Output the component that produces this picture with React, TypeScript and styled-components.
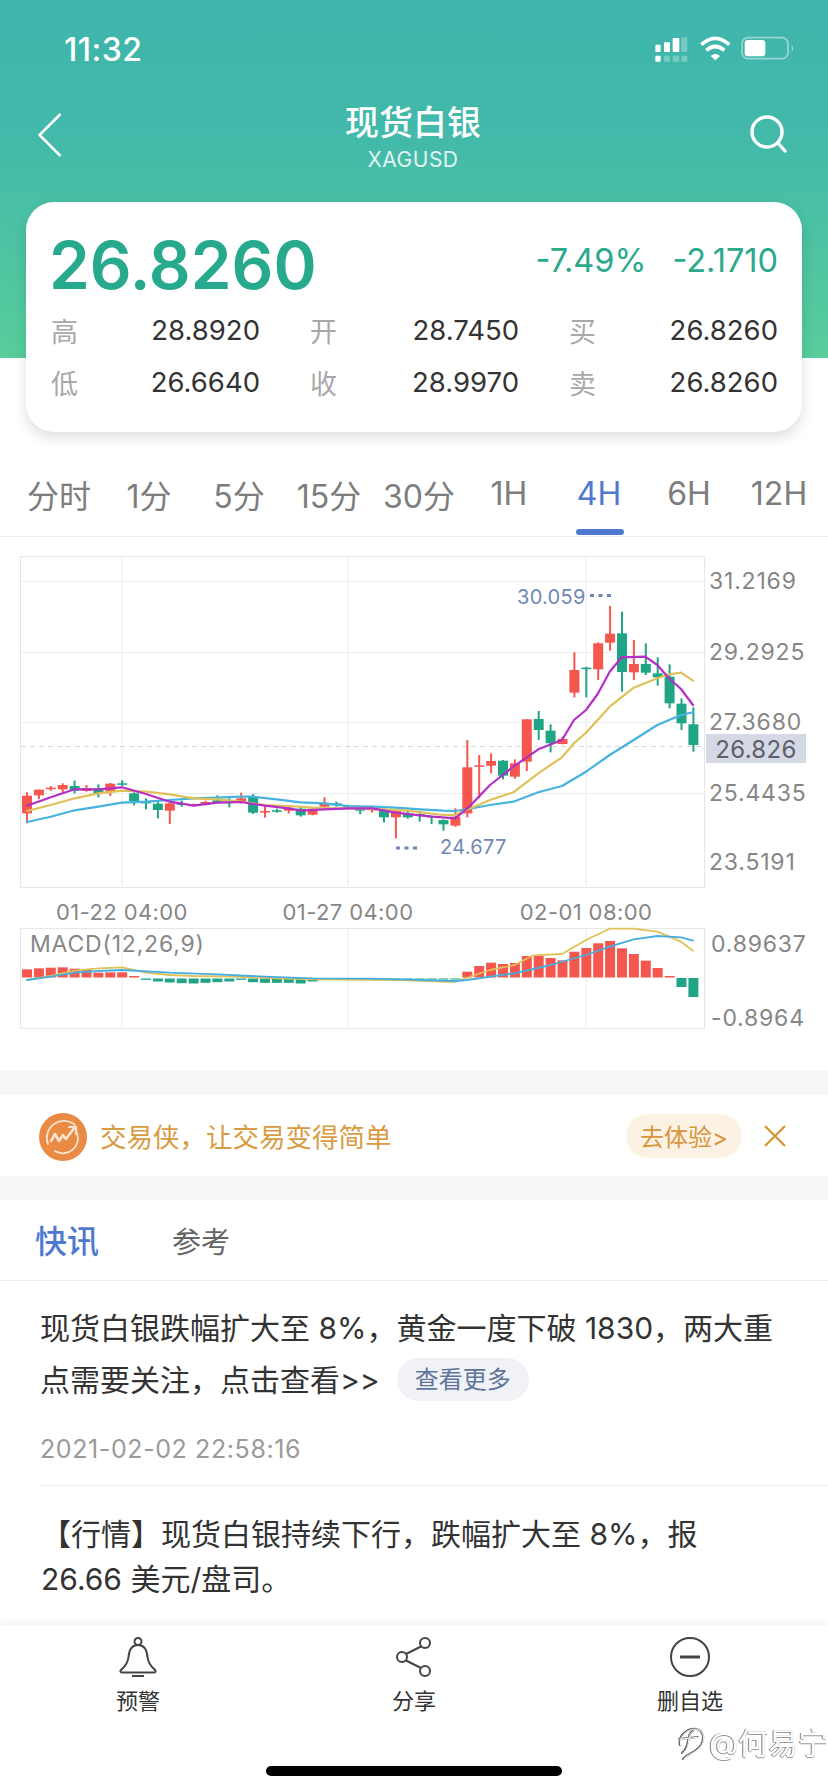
import React from "react";
import styled, { createGlobalStyle } from "styled-components";

const FONT = `Inter, "Noto Sans CJK SC", sans-serif`;

const Global = createGlobalStyle`
  html, body { margin: 0; padding: 0; background: #fff; }
  body { font-family: ${FONT}; text-spacing-trim: space-all; }
  * { box-sizing: border-box; }
`;

const Page = styled.div`
  width: 828px;
  height: 1792px;
  overflow: hidden;
  position: relative;
  background: #fff;
  display: flex;
  flex-direction: column;
`;

const Hero = styled.header`
  height: 432px;
  background: linear-gradient(180deg, #3fb5ac 0, #42b9aa 130px, #58cd9b 358px) no-repeat;
  background-size: 100% 358px;
  flex: none;
`;
const StatusBar = styled.div`
  height: 98px;
  display: flex;
  align-items: center;
  justify-content: space-between;
  padding: 0 28px 0 64px;
`;
const Clock = styled.span`
  color: #fff;
  font-size: 32px;
  font-weight: 500;
  letter-spacing: 0.5px;
`;
const Nav = styled.nav`
  height: 104px;
  display: grid;
  grid-template-columns: 1fr auto 1fr;
  align-items: start;
  padding: 0 40px 0 38px;
`;
const BackIcon = styled.svg`
  margin-top: 15px;
  justify-self: start;
`;
const SearchIcon = styled.svg`
  margin-top: 17px;
  justify-self: end;
`;
const TitleBlock = styled.div`
  padding-top: 5px;
  text-align: center;
  color: #fff;
`;
const Title = styled.div`
  font-size: 34px;
  line-height: 40px;
  font-weight: 500;
`;
const Symbol = styled.div`
  font-size: 21px;
  line-height: 24px;
  letter-spacing: 0.5px;
  margin-top: 5px;
  opacity: 0.85;
`;

const QuoteCard = styled.section`
  width: 776px;
  height: 230px;
  margin-left: 26px;
  padding: 26px 24px 0 25px;
  background: #fff;
  border-radius: 28px;
  box-shadow: 0 6px 14px rgba(0, 0, 0, 0.13);
`;
const PriceRow = styled.div`
  height: 74px;
  display: flex;
  align-items: center;
  justify-content: space-between;
  margin-bottom: 2px;
`;
const Price = styled.div`
  margin-left: -2px;
  font-size: 65.5px;
  font-weight: 600;
  color: #27a98d;
`;
const Changes = styled.div`
  display: flex;
  gap: 26px;
  margin-top: -10px;
  color: #2aa98b;
  font-size: 32.5px;
`;
const Stats = styled.div`
  display: grid;
  grid-template-columns: repeat(3, 209px);
  justify-content: space-between;
  grid-auto-rows: 52px;
`;
const Stat = styled.div`
  display: flex;
  align-items: center;
  justify-content: space-between;
`;
const StatLabel = styled.span`
  color: #a8a8a8;
  font-size: 27px;
`;
const StatValue = styled.span`
  color: #333;
  font-size: 27.5px;
`;

const Periods = styled.div`
  flex: none;
  margin-top: 23px;
  height: 82px;
  padding: 0 0 4px 14px;
  display: grid;
  grid-template-columns: repeat(9, 90px);
  border-bottom: 1px solid #ececec;
`;
const Period = styled.div<{ $active?: boolean }>`
  position: relative;
  display: flex;
  align-items: center;
  justify-content: center;
  font-size: 32px;
  white-space: nowrap;
  color: ${(p) => (p.$active ? "#4f78cf" : "#7d7d7d")};
  &::after {
    content: "";
    display: ${(p) => (p.$active ? "block" : "none")};
    position: absolute;
    left: 22px;
    right: 20px;
    bottom: -3px;
    height: 6px;
    border-radius: 3px;
    background: #4f78cf;
  }
`;

const ChartSvg = styled.svg`
  display: block;
  flex: none;
`;
const AxisText = styled.text`
  font-family: ${FONT};
  font-size: 23px;
  letter-spacing: 0.8px;
  fill: #868686;
  dominant-baseline: central;
`;
const DateText = styled(AxisText)`
  font-size: 22px;
  letter-spacing: 0.4px;
`;
const TagText = styled(AxisText)`
  fill: #5d6068;
  font-size: 24px;
  letter-spacing: 0.3px;
`;
const NoteText = styled(AxisText)`
  fill: #6f87b6;
  font-size: 20px;
  letter-spacing: 0.3px;
`;

const Band = styled.div`
  flex: none;
  height: 24px;
  background: #f6f6f6;
`;
const AdRow = styled.div`
  flex: none;
  height: 81px;
  display: flex;
  align-items: center;
  padding: 0 42px 0 39px;
`;
const AdLogo = styled.svg`
  margin-top: 3px;
  flex: none;
`;
const AdText = styled.span`
  margin-left: 13px;
  font-size: 26.5px;
  color: #d99b42;
`;
const AdPill = styled.span`
  margin-left: auto;
  width: 116px;
  height: 44px;
  border-radius: 22px;
  background: #fbf2e3;
  color: #d8963c;
  font-size: 24px;
  display: flex;
  align-items: center;
  justify-content: center;
`;
const AdClose = styled.svg`
  margin-left: 22px;
  flex: none;
`;

const NewsTabs = styled.div`
  flex: none;
  height: 81px;
  display: flex;
  align-items: center;
  padding-left: 35px;
  border-bottom: 1px solid #ececec;
`;
const NewsTab = styled.span<{ $active?: boolean }>`
  font-size: ${(p) => (p.$active ? "32px" : "29px")};
  font-weight: ${(p) => (p.$active ? 500 : 400)};
  color: ${(p) => (p.$active ? "#4f78cf" : "#666")};
  margin-right: 73px;
  margin-bottom: ${(p) => (p.$active ? "3px" : "0")};
`;
const NewsList = styled.div`
  flex: 1;
  overflow: hidden;
  padding-left: 41px;
`;
const Article = styled.article`
  padding: 21px 38px 21px 0;
  border-bottom: 1px solid #ececec;
`;
const ArticleText = styled.p`
  margin: 0 0 0 -1px;
  font-size: 30px;
  line-height: 52px;
  color: #333;
`;
const MorePill = styled.span`
  display: inline-flex;
  align-items: center;
  justify-content: center;
  width: 132px;
  height: 43px;
  margin-left: 17px;
  vertical-align: 3px;
  border-radius: 22px;
  background: #f0f2f5;
  color: #61749a;
  font-size: 24px;
  line-height: 43px;
`;
const Stamp = styled.div`
  margin: 28px 0 0 -1px;
  font-size: 25px;
  letter-spacing: 0.6px;
  line-height: 30px;
  color: #9a9a9a;
`;
const Brief = styled.p`
  margin: 26px 0 0 0;
  font-size: 30px;
  line-height: 45px;
  color: #333;
`;

const BottomBar = styled.footer`
  flex: none;
  height: 167px;
  padding-top: 12px;
  display: grid;
  grid-template-columns: repeat(3, 276px);
  align-items: start;
  background: #fff;
  box-shadow: 0 -3px 7px rgba(0, 0, 0, 0.05);
  position: relative;
`;
const BarItem = styled.div`
  display: flex;
  flex-direction: column;
  align-items: center;
  gap: 10px;
`;
const BarLabel = styled.span`
  font-size: 22px;
  line-height: 28px;
  color: #333;
`;
const Watermark = styled.div`
  position: absolute;
  left: 677px;
  top: 98px;
  display: flex;
  align-items: center;
  gap: 4px;
  font-size: 30px;
  line-height: 40px;
  color: #fff;
  text-shadow: -1px 0 0 #777, 0 1px 0 #999;
`;
const HomeBar = styled.div`
  position: absolute;
  left: 266px;
  top: 141px;
  width: 296px;
  height: 10px;
  border-radius: 5px;
  background: #000;
`;

type C = [number, number, number, number, "r" | "g"];
const candles: C[] = [
  [767,820,757,850,"r"],[749,766,749,777,"r"],[743,747,738,752,"r"],[735,748,730,758,"r"],
  [738,752,722,760,"g"],[744,753,735,755,"r"],[745,760,733,772,"g"],[731,755,729,768,"r"],
  [730,734,721,738,"g"],[760,783,757,796,"g"],[783,790,775,808,"g"],[791,810,785,835,"g"],
  [790,812,788,852,"r"],[790,793,782,800,"g"],[793,797,791,799,"r"],[786,794,782,796,"r"],
  [781,788,766,790,"g"],[785,788,775,802,"g"],[775,788,758,790,"r"],[771,818,762,822,"g"],
  [813,816,798,833,"r"],[811,815,806,818,"g"],[803,812,797,820,"r"],[806,826,800,830,"g"],
  [806,824,803,826,"r"],[790,800,772,803,"r"],[790,796,785,800,"g"],[798,802,795,805,"g"],
  [805,812,800,823,"g"],[806,811,800,818,"r"],[812,832,805,847,"g"],[813,832,810,895,"r"],
  [820,832,812,836,"g"],[822,826,815,845,"g"],[828,832,828,852,"g"],[840,853,838,872,"g"],
  [830,857,805,860,"r"],[682,820,600,832,"r"],[676,680,645,775,"r"],[663,677,640,700,"r"],
  [662,707,660,718,"g"],[670,710,658,716,"r"],[538,665,538,693,"r"],[537,570,513,600,"g"],
  [572,610,553,637,"g"],[597,612,590,613,"r"],[390,458,337,472,"r"],[383,387,380,472,"g"],
  [310,388,307,420,"r"],[281,308,198,332,"r"],[280,396,215,455,"g"],[372,397,300,420,"r"],
  [372,398,310,405,"g"],[400,412,352,437,"g"],[410,490,373,505,"g"],[491,550,475,570,"g"],
  [553,615,502,635,"g"],
];
const RED = "#f5574f";
const GREEN = "#1fa585";
const cx = (i: number) => 27 + 11.9 * i;
const py = (v: number) => 540 + v / 3;

const pts = (a: number[][], ox: number, oy: number) =>
  a.map(([x, y]) => `${(x / 3 + ox).toFixed(1)},${(y / 3 + oy).toFixed(1)}`).join(" ");

const ma5L = [[81,797],[152,772],[224,748],[295,748],[366,742],[438,762],[509,785],[581,797],[652,788],[723,786],[795,797],[866,805],[902,812],[973,808],[1045,805],[1116,805],[1187,818],[1259,826],[1300,830]];
const ma5R = [[100,830],[165,835],[205,803],[270,735],[340,680],[415,628],[486,600],[522,540],[558,510],[593,462],[629,395],[665,352],[736,350],[772,375],[807,415],[843,447],[879,495]];
const ma10L = [[81,813],[152,795],[224,775],[295,760],[366,752],[438,755],[509,763],[581,775],[652,778],[723,785],[795,795],[866,798],[937,803],[1009,805],[1080,805],[1151,808],[1222,812],[1330,825]];
const ma10R = [[130,825],[165,825],[205,808],[270,780],[340,757],[415,700],[486,652],[522,610],[558,578],[629,500],[701,443],[772,415],[807,403],[843,398],[879,422]];
const ma20L = [[81,846],[152,830],[224,811],[295,800],[366,788],[438,785],[509,780],[581,775],[652,773],[723,770],[759,770],[830,778],[902,787],[973,790],[1045,798],[1116,800],[1187,803],[1259,808],[1330,812]];
const ma20R = [[130,812],[165,813],[205,807],[270,795],[340,785],[415,757],[486,738],[558,695],[629,645],[701,600],[772,555],[843,525],[879,517]];

const macdBase = 977.5;
const macdRedTops: [number, number][] = [
  [0,388],[1,385],[2,383],[3,382],[4,386],[5,388],[6,398],[7,397],[8,397],[9,408],
];
const macdGreen: [number, number][] = [
  [10,419],[11,424],[12,427],[13,429],[14,430],[15,428],[16,426],[17,424],[18,419],[19,426],[20,428],[21,428],[22,428],[23,430],[24,424],
  [25,416],[26,416],[27,416],[28,416],[29,416],[30,416],[31,417],[32,417],[33,418],[34,418],[35,418],[36,418],
];
const macdRedR: [number, number][] = [
  [37,275],[38,258],[39,248],[40,252],[41,249],[42,228],[43,228],[44,234],[45,241],[46,215],[47,204],[48,190],[49,183],[50,205],[51,222],[52,242],[53,264],[54,288],
];
const dL = [[81,420],[152,408],[224,392],[295,385],[366,382],[438,398],[509,405],[581,408],[702,410],[830,415],[937,418],[1200,420],[1365,426]];
const dR = [[190,297],[270,270],[344,255],[400,226],[486,222],[558,180],[629,146],[701,146],[772,155],[843,185],[879,212]];
const eL = [[81,420],[152,410],[224,398],[295,393],[366,390],[509,398],[652,403],[795,410],[937,415],[1100,416],[1200,418],[1365,423]];
const eR = [[165,303],[201,300],[344,280],[451,255],[558,225],[629,200],[701,178],[772,168],[843,172],[879,182]];

const Line = ({ l, r, c, w, ol, yl, or, yr }: { l: number[][]; r: number[][]; c: string; w: number; ol: number; yl: number; or: number; yr: number }) => (
  <polyline
    points={`${pts(l, ol, yl)} ${pts(r, or, yr)}`}
    fill="none"
    stroke={c}
    strokeWidth={w}
    strokeLinejoin="round"
    strokeLinecap="round"
  />
);

const Chart = () => (
  <ChartSvg width={828} height={534} viewBox="0 537 828 534">
    <rect x={20.5} y={556.5} width={684} height={331} fill="none" stroke="#e6e6e6" />
    {[581, 652, 722, 793].map((y) => (
      <line key={y} x1={21} x2={704} y1={y + 0.5} y2={y + 0.5} stroke="#ececec" />
    ))}
    {[122, 348, 586].map((x) => (
      <line key={x} x1={x} x2={x} y1={557} y2={888} stroke="#f2f2f2" strokeWidth={1.5} />
    ))}
    <line x1={21} x2={704} y1={746.5} y2={746.5} stroke="#d5d8d8" strokeDasharray="5 4" />

    {candles.map(([t, b, wt, wb, k], i) => (
      <g key={i} fill={k === "r" ? RED : GREEN}>
        <rect x={cx(i) - 1} y={py(wt)} width={2} height={(wb - wt) / 3} />
        <rect x={cx(i) - 5} y={py(t)} width={10} height={Math.max((b - t) / 3, 1.5)} />
      </g>
    ))}
    <Line l={ma20L} r={ma20R} c="#45b3de" w={2.2} ol={0} yl={540} or={400} yr={540} />
    <Line l={ma10L} r={ma10R} c="#dfc158" w={2.2} ol={0} yl={540} or={400} yr={540} />
    <Line l={ma5L} r={ma5R} c="#b32fc6" w={2.2} ol={0} yl={540} or={400} yr={540} />

    <NoteText x={517} y={597}>30.059</NoteText>
    <line x1={590} x2={611} y1={595.5} y2={595.5} stroke="#6f87b6" strokeWidth={3} strokeDasharray="4 4.5" />
    <NoteText x={440} y={847}>24.677</NoteText>
    <line x1={396} x2={417} y1={848} y2={848} stroke="#6f87b6" strokeWidth={3} strokeDasharray="4 4.5" />

    <AxisText x={709} y={581}>31.2169</AxisText>
    <AxisText x={709} y={652}>29.2925</AxisText>
    <AxisText x={709} y={722}>27.3680</AxisText>
    <AxisText x={709} y={793}>25.4435</AxisText>
    <AxisText x={709} y={862}>23.5191</AxisText>
    <rect x={706} y={734} width={100} height={29} fill="#d5d9e6" />
    <TagText x={756} y={749} textAnchor="middle">26.826</TagText>

    <DateText x={122} y={912} textAnchor="middle">01-22 04:00</DateText>
    <DateText x={348} y={912} textAnchor="middle">01-27 04:00</DateText>
    <DateText x={586} y={912} textAnchor="middle">02-01 08:00</DateText>

    <rect x={20.5} y={928.5} width={684} height={100} fill="none" stroke="#e6e6e6" />
    {[122, 348, 586].map((x) => (
      <line key={x} x1={x} x2={x} y1={929} y2={1028} stroke="#f2f2f2" strokeWidth={1.5} />
    ))}
    <AxisText x={30} y={944}>MACD(12,26,9)</AxisText>
    {macdRedTops.map(([i, t]) => (
      <rect key={i} x={cx(i) - 5} y={840 + t / 3} width={10} height={macdBase - (840 + t / 3)} fill={RED} />
    ))}
    {macdGreen.map(([i, b]) => (
      <rect key={i} x={cx(i) - 5} y={macdBase + 1} width={10} height={(b - 415) / 3} fill={GREEN} />
    ))}
    {macdRedR.map(([i, t]) => (
      <rect key={i} x={cx(i) - 5} y={880 + t / 3} width={10} height={macdBase - (880 + t / 3)} fill={RED} />
    ))}
    <rect x={cx(55) - 5} y={macdBase + 0.5} width={10} height={9} fill={GREEN} />
    <rect x={cx(56) - 5} y={macdBase + 0.5} width={10} height={19} fill={GREEN} />
    <Line l={dL} r={dR} c="#dfc158" w={1.8} ol={0} yl={840} or={400} yr={880} />
    <Line l={eL} r={eR} c="#45aede" w={1.8} ol={0} yl={840} or={400} yr={880} />
    <AxisText x={711} y={944}>0.89637</AxisText>
    <AxisText x={711} y={1018}>-0.8964</AxisText>
  </ChartSvg>
);

const StatusIcons = () => (
  <svg width={160} height={50} viewBox="0 0 480 150">
    <g fill="#fff">
      <rect x={46} y={62} width={16} height={22} rx={3} />
      <rect x={72} y={55} width={18} height={29} rx={3} />
      <rect x={98} y={42} width={20} height={42} rx={3} />
      <rect x={46} y={95} width={16} height={18} rx={3} />
    </g>
    <g fill="#fff" opacity={0.28}>
      <rect x={124} y={40} width={18} height={44} />
      <rect x={72} y={95} width={18} height={18} />
      <rect x={98} y={95} width={20} height={18} />
      <rect x={124} y={95} width={18} height={18} />
    </g>
    <path d="M184 62Q226 24 268 62" fill="none" stroke="#fff" strokeWidth={11} />
    <path d="M199 79Q226 56 253 79" fill="none" stroke="#fff" strokeWidth={11} />
    <path d="M212 96L226 109L240 96Q226 84 212 96Z" fill="#fff" />
    <rect x={306} y={41} width={138} height={63} rx={18} fill="none" stroke="#fff" strokeOpacity={0.45} strokeWidth={5} />
    <rect x={314} y={48} width={62} height={49} rx={10} fill="#fff" />
    <path d="M455 62Q464 73 455 85Z" fill="#fff" opacity={0.45} />
  </svg>
);

const periods = ["分时", "1分", "5分", "15分", "30分", "1H", "4H", "6H", "12H"];
const rows = [
  ["高", "28.8920"], ["开", "28.7450"], ["买", "26.8260"],
  ["低", "26.6640"], ["收", "28.9970"], ["卖", "26.8260"],
];

const logoBubble = "M3 20C1 10 11 3 19 4C26 5 28 13 24 20C20 26 14 28 9 31L6 34";
const logoF = "M17 5C13 7 12 10 11 16C10 22 9 25 5 28M2 14L21 12";

export default function App() {
  return (
    <Page>
      <Global />
      <Hero>
        <StatusBar>
          <Clock>11:32</Clock>
          <StatusIcons />
        </StatusBar>
        <Nav>
          <BackIcon width={24} height={44} viewBox="0 0 24 44" fill="none" stroke="#fff" strokeWidth={2.6}>
            <path d="M22.5 1L1.5 22L22.5 43" />
          </BackIcon>
          <TitleBlock>
            <Title>现货白银</Title>
            <Symbol>XAGUSD</Symbol>
          </TitleBlock>
          <SearchIcon width={38} height={38} viewBox="0 0 38 38" fill="none" stroke="#fff" strokeWidth={3.4} strokeLinecap="round">
            <circle cx={17} cy={17} r={15} />
            <path d="M28 28L35 36" />
          </SearchIcon>
        </Nav>
        <QuoteCard>
          <PriceRow>
            <Price>26.8260</Price>
            <Changes>
              <span>-7.49%</span>
              <span>-2.1710</span>
            </Changes>
          </PriceRow>
          <Stats>
            {rows.map(([k, v]) => (
              <Stat key={k}>
                <StatLabel>{k}</StatLabel>
                <StatValue>{v}</StatValue>
              </Stat>
            ))}
          </Stats>
        </QuoteCard>
      </Hero>

      <Periods>
        {periods.map((p) => (
          <Period key={p} $active={p === "4H"}>{p}</Period>
        ))}
      </Periods>

      <Chart />
      <Band />

      <AdRow>
        <AdLogo width={48} height={48} viewBox="0 0 48 48">
          <circle cx={24} cy={24} r={24} fill="#e98a45" />
          <g fill="none" stroke="#fbe3cf" strokeLinecap="round">
            <path d="M36 12A17 17 0 0 0 9 31" strokeWidth={1.8} />
            <path d="M38 20A15 15 0 0 1 16 38" strokeWidth={1.8} />
            <path d="M12 28L16 21L20 28L24 22L27 26L36 14" strokeWidth={2.6} strokeLinejoin="round" />
            <path d="M30 14H37V21" strokeWidth={2.2} />
          </g>
        </AdLogo>
        <AdText>交易侠，让交易变得简单</AdText>
        <AdPill>去体验&gt;</AdPill>
        <AdClose width={22} height={22} viewBox="0 0 22 22" stroke="#d8963c" strokeWidth={2.4}>
          <path d="M1 1L21 21M21 1L1 21" />
        </AdClose>
      </AdRow>
      <Band />

      <NewsTabs>
        <NewsTab $active>快讯</NewsTab>
        <NewsTab>参考</NewsTab>
      </NewsTabs>
      <NewsList>
        <Article>
          <ArticleText>
            <span>现货白银跌幅扩大至 8%，黄金一度下破 1830，两大重</span>
            <br />
            <span>点需要关注，点击查看&gt;&gt;</span>
            <MorePill>查看更多</MorePill>
          </ArticleText>
          <Stamp>2021-02-02 22:58:16</Stamp>
        </Article>
        <Brief>
          【行情】现货白银持续下行，跌幅扩大至 8%，报
          <br />
          26.66 美元/盘司。
        </Brief>
      </NewsList>

      <BottomBar>
        <BarItem>
          <svg width={40} height={40} viewBox="0 0 40 40" fill="none" stroke="#444" strokeWidth={2}>
            <circle cx={20} cy={4.5} r={3.5} />
            <path d="M20 8C13 8 11 14 10.5 20C10 27 6 30 2.5 33.5Q2 35.5 4 35.5H36Q38 35.5 37.5 33.5C34 30 30 27 29.5 20C29 14 27 8 20 8Z" />
            <path d="M14 39H26" />
          </svg>
          <BarLabel>预警</BarLabel>
        </BarItem>
        <BarItem>
          <svg width={40} height={40} viewBox="0 0 40 40" fill="none" stroke="#444" strokeWidth={2}>
            <circle cx={31} cy={6} r={5} />
            <circle cx={8} cy={20} r={5} />
            <circle cx={31} cy={34} r={5} />
            <path d="M27 9.5L12 17M12 23.5L27 31" />
          </svg>
          <BarLabel>分享</BarLabel>
        </BarItem>
        <BarItem>
          <svg width={40} height={40} viewBox="0 0 40 40" fill="none" stroke="#444" strokeWidth={2}>
            <circle cx={20} cy={20} r={19} />
            <path d="M10 20H30" strokeWidth={3} />
          </svg>
          <BarLabel>删自选</BarLabel>
        </BarItem>
        <Watermark>
          <svg width={28} height={36} viewBox="0 0 28 36" fill="none" strokeLinecap="round">
            <g stroke="#666" strokeWidth={2.2}>
              <path d={logoBubble} />
              <path d={logoF} />
            </g>
            <g stroke="#fff" strokeWidth={1} transform="translate(0.6 0.2)">
              <path d={logoBubble} />
              <path d={logoF} />
            </g>
          </svg>
          <span>@何易宁</span>
        </Watermark>
        <HomeBar />
      </BottomBar>
    </Page>
  );
}
